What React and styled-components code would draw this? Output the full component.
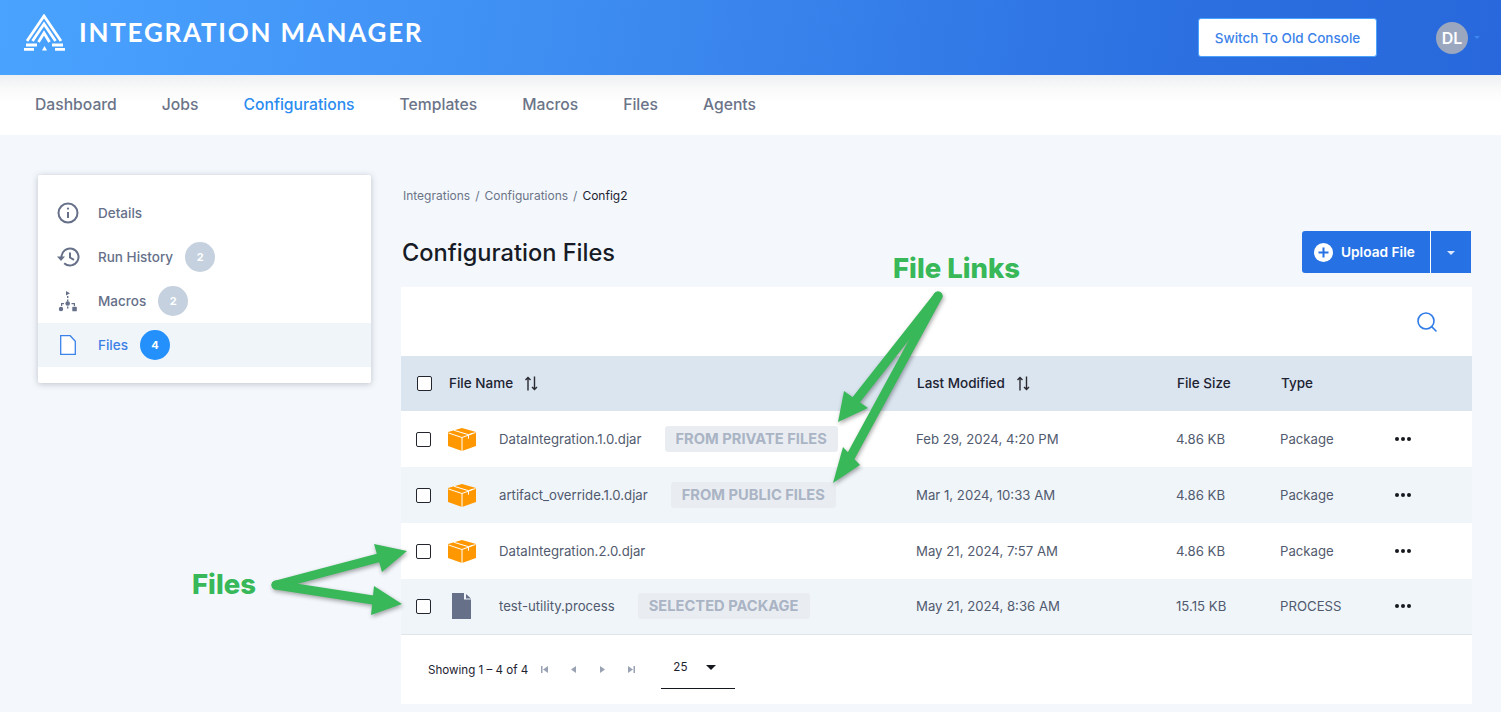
import React from "react";
import styled, { createGlobalStyle } from "styled-components";
import { Search } from "lucide-react";

const Global = createGlobalStyle`
  html, body { margin: 0; padding: 0; background: #f4f8fc; }
  body { font-family: "Inter", "Noto Sans", sans-serif; color: #1d2230; overflow: hidden; }
  * { box-sizing: border-box; }
`;

const Page = styled.div`
  position: relative;
  width: 1501px;
  height: 712px;
  overflow: hidden;
`;
const TopBar = styled.header`
  height: 75px;
  background: linear-gradient(100deg, #4aa3ff 0%, #3f8ff3 35%, #2b6fe0 80%, #2868dc 100%);
  display: flex;
  align-items: center;
  padding: 0 21px 10px 23px;
`;
const Brand = styled.div`
  display: flex;
  align-items: center;
  gap: 13px;
  flex: 1;
`;
const BrandName = styled.span`
  font-family: "Lato", sans-serif;
  font-weight: 700;
  font-size: 26px;
  letter-spacing: 1.75px;
  color: #fff;
  white-space: nowrap;
  margin-top: -2px;
`;
const SwitchButton = styled.button`
  width: 179px;
  height: 39px;
  margin-top: 10px;
  background: #fff;
  border: 1px solid #4aa3ff;
  border-radius: 3px;
  color: #3b82ea;
  font: 500 13.5px "Inter", sans-serif;
`;
const UserMenu = styled.div`
  display: flex;
  align-items: center;
  gap: 6px;
  margin: 10px 0 0 59px;
`;
const Avatar = styled.div`
  width: 32px;
  height: 32px;
  border-radius: 50%;
  background: #9aa7bf;
  color: #fff;
  font-weight: 600;
  font-size: 16px;
  display: flex;
  align-items: center;
  justify-content: center;
`;
const Caret = styled.span`
  width: 0;
  height: 0;
  border-left: ${p => p.$size || 4}px solid transparent;
  border-right: ${p => p.$size || 4}px solid transparent;
  border-top: ${p => p.$size || 4}px solid ${p => p.$color || "#3d86ee"};
`;
const NavBar = styled.nav`
  height: 60px;
  background: linear-gradient(#eef0f2 0, #fbfbfb 16px, #fff 28px);
  display: flex;
  align-items: center;
  gap: 45px;
  padding: 0 0 2px 35px;
`;
const NavLink = styled.a`
  font-size: 15.7px;
  font-weight: 500;
  color: ${p => (p.$active ? "#2b8cf0" : "#6b7488")};
`;
const Content = styled.div`
  display: flex;
  align-items: flex-start;
  padding: 40px 29px 0 38px;
  gap: 30px;
`;
const SideCard = styled.aside`
  width: 333px;
  flex: none;
  background: #fff;
  border-radius: 2px;
  padding: 16px 0;
  box-shadow: 0 1px 6px rgba(60, 70, 90, 0.3);
`;
const SideItem = styled.div`
  height: 44px;
  display: flex;
  align-items: center;
  padding-left: 18px;
  background: ${p => (p.$active ? "#f0f5fa" : "transparent")};
  color: ${p => (p.$active ? "#3b7fe6" : "#667089")};
  font-size: 13.5px;
  font-weight: 500;
`;
const SideIcon = styled.span`
  width: 24px;
  height: 24px;
  margin-right: 18px;
  display: flex;
  align-items: center;
  justify-content: center;
`;
const Count = styled.span`
  width: 30px;
  height: 30px;
  border-radius: 50%;
  margin-left: 12px;
  background: ${p => (p.$active ? "#2390fb" : "#c5d1de")};
  color: #fff;
  font-size: 11px;
  font-weight: 700;
  display: flex;
  align-items: center;
  justify-content: center;
`;
const Main = styled.main`
  width: 1071px;
  flex: none;
`;
const Crumbs = styled.div`
  font-size: 12px;
  line-height: 14px;
  margin-top: 14px;
  padding-left: 2px;
  color: #6b7488;
  display: flex;
  gap: 5px;
`;
const CrumbCurrent = styled.span`
  color: #1d2230;
`;
const TitleRow = styled.div`
  display: flex;
  align-items: center;
  justify-content: space-between;
  margin: 28px 1px 14px 0;
  padding-left: 1px;
  height: 42px;
`;
const Title = styled.h1`
  margin: 0;
  font-size: 23.6px;
  font-weight: 500;
  color: #171b26;
`;
const SplitButton = styled.div`
  display: flex;
  height: 42px;
  color: #fff;
  background: #2672e4;
  border-radius: 3px 0 0 3px;
`;
const UploadPart = styled.div`
  width: 129px;
  display: flex;
  align-items: center;
  gap: 8px;
  padding-left: 12px;
  font-size: 13.7px;
  font-weight: 600;
  border-right: 1px solid #fff;
`;
const CaretPart = styled.div`
  width: 40px;
  display: flex;
  align-items: center;
  justify-content: center;
  padding-top: 1px;
`;
const TableCard = styled.section`
  background: #fff;
  height: 417px;
`;
const SearchRow = styled.div`
  height: 69px;
  display: flex;
  align-items: center;
  justify-content: flex-end;
  padding: 0 33px 0 0;
  color: #2f7ce6;
`;
const Row = styled.div`
  display: grid;
  grid-template-columns: 32px 468px 260px 104px 114px 1fr;
  align-items: center;
  height: ${p => p.$h}px;
  padding-left: ${p => (p.$head ? 16 : 15)}px;
  padding-bottom: ${p => (p.$h < 56 ? 1 : 0)}px;
  background: ${p => (p.$head ? "#dae5f0" : p.$alt ? "#f0f5fa" : "#fff")};
  font-size: 13.2px;
  color: #515a6e;
`;
const HeadCell = styled.div`
  display: flex;
  align-items: center;
  gap: 11px;
  font-size: 13.5px;
  font-weight: 500;
  color: #1d2230;
`;
const Check = styled.span`
  width: 15px;
  height: 15px;
  border: 1.5px solid #23262e;
  border-radius: 2px;
  background: #fff;
`;
const NameCell = styled.div`
  display: flex;
  align-items: center;
`;
const FileIconBox = styled.span`
  width: 51px;
  flex: none;
  display: flex;
  padding-left: ${p => p.$pad || 0}px;
`;
const FileName = styled.span`
  white-space: nowrap;
`;
const Tag = styled.span`
  margin-left: 23px;
  height: 26px;
  padding: 0 11px;
  background: #e9edf2;
  border-radius: 3px;
  color: #aab4c4;
  font-size: 14.7px;
  font-weight: 700;
  display: flex;
  align-items: center;
  white-space: nowrap;
`;
const Dots = styled.span`
  display: flex;
  gap: 2px;
  margin-left: 1px;
`;
const Dot = styled.span`
  width: 4px;
  height: 4px;
  border-radius: 50%;
  background: #16181f;
`;
const Footer = styled.div`
  height: 70px;
  border-top: 1px solid #dfe3ea;
  display: flex;
  align-items: center;
  padding-left: 27px;
  font-size: 11.6px;
  color: #1d2230;
`;
const Pager = styled.div`
  display: flex;
  align-items: center;
  gap: 20px;
  margin-left: 12px;
  color: #9aa3b3;
`;
const PageSize = styled.div`
  width: 74px;
  height: 42px;
  margin: -4px 0 0 25px;
  padding-left: 12px;
  border-bottom: 1px solid #16181f;
  display: flex;
  align-items: center;
  gap: 19px;
`;
const Overlay = styled.svg`
  position: absolute;
  left: 0;
  top: 0;
  pointer-events: none;
  filter: drop-shadow(1px 2px 2px rgba(0, 0, 0, 0.35));
`;
const Callout = styled.span`
  position: absolute;
  left: ${p => p.$x}px;
  top: ${p => p.$y}px;
  color: #38b858;
  font-size: 27.5px;
  font-weight: 800;
  line-height: 30px;
  white-space: nowrap;
`;

const Logo = () => (
  <svg width="43" height="38" viewBox="0 0 43 38" fill="none" stroke="#fff" strokeWidth="2.8">
    <path d="M4 27 21 2l17 25" />
    <path d="M9.5 27 21 10l11.5 17" />
    <path d="M15.5 28 21 19l5.5 9" />
    <path d="M3 31h11M29 31h11M1 35.4h10M32 35.4h10" />
    <path d="M19 36.5h5L21.5 32z" fill="#fff" stroke="none" />
  </svg>
);
const BoxIcon = () => (
  <svg width="28" height="23" viewBox="0 0 28 23">
    <path d="M14 0 28 4v14l-14 5-14-5V4z" fill="#ff9800" />
    <path d="M.5 5 14 9.500 27.500 4.500M14 9.500V23M6 2.300 20.500 6.700v4M20.500 6.700 25 5.100" fill="none" stroke="#fff" strokeWidth="1" />
  </svg>
);
const DocIcon = () => (
  <svg width="20" height="26" viewBox="0 0 20 26">
    <path d="M0 0h12v6.500h7V26H0z" fill="#667089" />
    <path d="M14 1l5 4.500h-5z" fill="#667089" />
  </svg>
);
const InfoIcon = () => (
  <svg width="22" height="22" viewBox="0 0 22 22" fill="none" stroke="#667089" strokeWidth="2">
    <circle cx="11" cy="11" r="9.500" />
    <path d="M11 10v6" />
    <circle cx="11" cy="6.600" r="1.100" fill="#667089" stroke="none" />
  </svg>
);
const HistoryIcon = () => (
  <svg width="23" height="20" viewBox="0 0 23 20" fill="none" stroke="#667089" strokeWidth="2">
    <path d="M4.500 10a8.500 8.500 0 1 1 2.700 6.200" />
    <path d="M13 5.500V10.500l4 2.300" />
    <path d="M0 9.500h8l-4 4.500z" fill="#667089" stroke="none" />
  </svg>
);
const MacroIcon = () => (
  <svg width="20" height="21" viewBox="0 0 20 21" fill="#667089">
    <path d="M8 0l4 2.200-4 2.200z" />
    <path d="M9 5h1.400v2H9zM9 8.500h1.400v2H9z" />
    <circle cx="9.700" cy="12.500" r="2.300" />
    <path d="M3 12h3v1.200H4.200V15H3zM13.500 12H17v3h-1.200v-1.800h-2.300z" />
    <circle cx="3" cy="18" r="2.200" />
    <rect x="14.300" y="15.800" width="4.500" height="4.500" rx="0.600" />
    <path d="M9 15.500h1.400v2H9z" />
  </svg>
);
const PageIcon = () => (
  <svg width="16" height="20" viewBox="0 0 16 20" fill="#fff" stroke="#3b82ea" strokeWidth="1.300">
    <path d="M.7.7h9.500l5.100 5.500v13.100H.7z" />
  </svg>
);
const SortIcon = () => (
  <svg width="14" height="15" viewBox="0 0 14 15" fill="none" stroke="#2a2a30" strokeWidth="1.400">
    <path d="M4 14.500V1.500M1.500 4l2.500-2.500L6.500 4M10.500 .5v13M8 11l2.500 2.500L13 11" />
  </svg>
);
const PlusIcon = () => (
  <svg width="19" height="19" viewBox="0 0 19 19">
    <circle cx="9.500" cy="9.500" r="9.500" fill="#fff" />
    <path d="M9.500 4.500v10M4.500 9.500h10" stroke="#2672e4" strokeWidth="2" />
  </svg>
);
const PagerIcon = ({ d }) => (
  <svg width="9" height="9" viewBox="0 0 9 9" fill="currentColor"><path d={d} /></svg>
);

const rows = [
  { name: "DataIntegration.1.0.djar", tag: "FROM PRIVATE FILES", date: "Feb 29, 2024, 4:20 PM", size: "4.86 KB", type: "Package", h: 56 },
  { name: "artifact_override.1.0.djar", tag: "FROM PUBLIC FILES", date: "Mar 1, 2024, 10:33 AM", size: "4.86 KB", type: "Package", h: 56 },
  { name: "DataIntegration.2.0.djar", date: "May 21, 2024, 7:57 AM", size: "4.86 KB", type: "Package", h: 56 },
  { name: "test-utility.process", tag: "SELECTED PACKAGE", date: "May 21, 2024, 8:36 AM", size: "15.15 KB", type: "PROCESS", h: 55, doc: true },
];
const navItems = ["Dashboard", "Jobs", "Configurations", "Templates", "Macros", "Files", "Agents"];

const Arrow = ({ x1, y1, bx, by, tip, w1, w2 }) => (
  <g fill="#38b858" stroke="none">
    <line x1={x1} y1={y1} x2={bx} y2={by} stroke="#38b858" strokeWidth="9" strokeLinecap="round" />
    <polygon points={`${tip[0]},${tip[1]} ${w1[0]},${w1[1]} ${w2[0]},${w2[1]}`} />
  </g>
);

export default function App() {
  return (
    <Page>
      <Global />
      <TopBar>
        <Brand>
          <Logo />
          <BrandName>INTEGRATION MANAGER</BrandName>
        </Brand>
        <SwitchButton>Switch To Old Console</SwitchButton>
        <UserMenu>
          <Avatar>DL</Avatar>
          <Caret $size={3.5} />
        </UserMenu>
      </TopBar>
      <NavBar>
        {navItems.map(n => (
          <NavLink key={n} $active={n === "Configurations"}>{n}</NavLink>
        ))}
      </NavBar>
      <Content>
        <SideCard>
          <SideItem><SideIcon><InfoIcon /></SideIcon>Details</SideItem>
          <SideItem><SideIcon><HistoryIcon /></SideIcon>Run History<Count>2</Count></SideItem>
          <SideItem><SideIcon><MacroIcon /></SideIcon>Macros<Count>2</Count></SideItem>
          <SideItem $active><SideIcon><PageIcon /></SideIcon>Files<Count $active>4</Count></SideItem>
        </SideCard>
        <Main>
          <Crumbs>
            <span>Integrations</span><span>/</span><span>Configurations</span><span>/</span>
            <CrumbCurrent>Config2</CrumbCurrent>
          </Crumbs>
          <TitleRow>
            <Title>Configuration Files</Title>
            <SplitButton>
              <UploadPart><PlusIcon />Upload File</UploadPart>
              <CaretPart><Caret $color="#dbe7fa" /></CaretPart>
            </SplitButton>
          </TitleRow>
          <TableCard>
            <SearchRow><Search size={24} strokeWidth={1.6} /></SearchRow>
            <Row $head $h={55}>
              <Check />
              <HeadCell>File Name <SortIcon /></HeadCell>
              <HeadCell>Last Modified <SortIcon /></HeadCell>
              <HeadCell>File Size</HeadCell>
              <HeadCell>Type</HeadCell>
            </Row>
            {rows.map((r, i) => (
              <Row key={r.name} $alt={i % 2 === 1} $h={r.h}>
                <Check />
                <NameCell>
                  <FileIconBox $pad={r.doc ? 4 : 0}>{r.doc ? <DocIcon /> : <BoxIcon />}</FileIconBox>
                  <FileName>{r.name}</FileName>
                  {r.tag && <Tag>{r.tag}</Tag>}
                </NameCell>
                <div>{r.date}</div>
                <div>{r.size}</div>
                <div>{r.type}</div>
                <Dots><Dot /><Dot /><Dot /></Dots>
              </Row>
            ))}
            <Footer>
              Showing 1 – 4 of 4
              <Pager>
                <PagerIcon d="M1 1h1.500v7H1zM8 1v7L3 4.500z" />
                <PagerIcon d="M7 1v7L2 4.500z" />
                <PagerIcon d="M2 1v7l5-3.500z" />
                <PagerIcon d="M1 1v7l5-3.500zM6.500 1H8v7H6.500z" />
              </Pager>
              <PageSize>25<Caret $size={5} $color="#16181f" /></PageSize>
            </Footer>
          </TableCard>
        </Main>
      </Content>
      <Overlay width="1501" height="712" viewBox="0 0 1501 712">
        <Arrow x1={938} y1={296} bx={856} by={400} tip={[838, 422]} w1={[844, 391]} w2={[868, 408]} />
        <Arrow x1={938} y1={296} bx={851} by={456} tip={[833, 483]} w1={[843, 447]} w2={[860, 465]} />
        <Arrow x1={276} y1={585} bx={378} by={558} tip={[407, 551]} w1={[374, 544]} w2={[382, 572]} />
        <Arrow x1={276} y1={585} bx={373} by={600} tip={[402, 604]} w1={[374, 586]} w2={[371, 615]} />
      </Overlay>
      <Callout $x={893} $y={253}>File Links</Callout>
      <Callout $x={192} $y={569}>Files</Callout>
    </Page>
  );
}
